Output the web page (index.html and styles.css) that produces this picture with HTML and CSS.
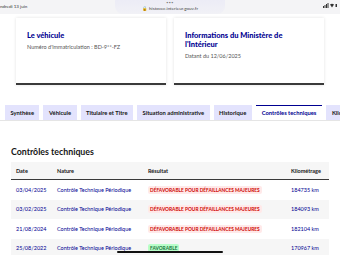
FILE: index.html
```html
<!DOCTYPE html>
<html lang="fr">
<head>
    <meta charset="UTF-8">
    <meta name="viewport" content="width=device-width, initial-scale=1.0">
    <title>HistoVec</title>
    <link rel="stylesheet" href="styles.css">
</head>
<body>
    <div class="statusbar">
        <span class="time">ndredi 13 juin</span>
        <div class="urlbox">
            <span class="dots">•••</span>
            <span class="url">🔒 histovec.interieur.gouv.fr</span>
        </div>
        <span class="icons">
            <svg width="14" height="5" viewBox="0 0 14 5">
                <rect x="0" y="3" width="1" height="2" fill="#333"/>
                <rect x="1.5" y="2" width="1" height="3" fill="#333"/>
                <rect x="3" y="1" width="1" height="4" fill="#333"/>
                <rect x="4.5" y="0" width="1" height="5" fill="#333"/>
                <path d="M7 1.6 Q9 0 11 1.6 L9 4.5 Z" fill="#333"/>
                <rect x="12.5" y="1" width="1.5" height="3" fill="#333"/>
            </svg>
        </span>
    </div>

    <div class="cards">
        <div class="card">
            <h3 class="card-title">Le véhicule</h3>
            <p class="card-text">Numéro d'immatriculation : BD-9**-FZ</p>
        </div>
        <div class="card">
            <h3 class="card-title">Informations du Ministère de l'Intérieur</h3>
            <p class="card-text">Datant du 12/06/2025</p>
        </div>
    </div>

    <div class="tabs">
        <div class="tab">Synthèse</div>
        <div class="tab">Véhicule</div>
        <div class="tab">Titulaire et Titre</div>
        <div class="tab">Situation administrative</div>
        <div class="tab">Historique</div>
        <div class="tab active">Contrôles techniques</div>
        <div class="tab">Kilométrage</div>
    </div>

    <div class="panel">
        <h2 class="panel-title">Contrôles techniques</h2>
        <table class="ct-table">
            <thead>
                <tr>
                    <th class="col-date">Date</th>
                    <th class="col-nature">Nature</th>
                    <th class="col-result">Résultat</th>
                    <th class="col-km">Kilométrage</th>
                </tr>
            </thead>
            <tbody>
                <tr>
                    <td>03/04/2025</td>
                    <td>Contrôle Technique Périodique</td>
                    <td><span class="badge bad">Défavorable pour défaillances majeures</span></td>
                    <td>184735 km</td>
                </tr>
                <tr>
                    <td>03/02/2025</td>
                    <td>Contrôle Technique Périodique</td>
                    <td><span class="badge bad">Défavorable pour défaillances majeures</span></td>
                    <td>184093 km</td>
                </tr>
                <tr>
                    <td>21/08/2024</td>
                    <td>Contrôle Technique Périodique</td>
                    <td><span class="badge bad">Défavorable pour défaillances majeures</span></td>
                    <td>182104 km</td>
                </tr>
                <tr>
                    <td>25/08/2022</td>
                    <td>Contrôle Technique Périodique</td>
                    <td><span class="badge good">Favorable</span></td>
                    <td>170967 km</td>
                </tr>
            </tbody>
        </table>
    </div>

    <div class="home-indicator"></div>
</body>
</html>
```

FILE: styles.css
```css
body {
    margin: 0;
    width: 340px;
    height: 255px;
    overflow: hidden;
    font-family: Lato, "Noto Sans", sans-serif;
    background-color: #fff;
    color: #161616;
    position: relative;
}
.statusbar {
    height: 14px;
    background-color: #f4f4f6;
    display: flex;
    align-items: flex-start;
    justify-content: space-between;
    font-size: 4.5px;
    color: #333;
}
.time {
    padding-top: 4px;
    width: 60px;
}
.urlbox {
    display: flex;
    flex-direction: column;
    align-items: center;
    width: 110px;
    height: 14px;
    background: linear-gradient(to bottom, #ececf6, #f1f1f6);
    border-radius: 0 0 8px 8px;
}
.dots {
    font-size: 3.5px;
    letter-spacing: 0.5px;
    line-height: 6px;
    color: #777;
}
.url {
    font-size: 4.5px;
    color: #444;
}
.icons {
    width: 60px;
    text-align: right;
    padding-top: 3px;
    padding-right: 3px;
    box-sizing: border-box;
}
.cards {
    display: flex;
    gap: 8px;
    padding: 4px 16px 0;
}
.card {
    flex: 1;
    background-color: #fff;
    box-shadow: 0 0 3px rgba(0, 0, 0, 0.12);
    border-bottom: 2px solid #3a3a3a;
    padding: 13px 12px 0 11px;
    height: 52px;
}
.card-title {
    margin: 0 0 4px;
    font-size: 7.5px;
    line-height: 9px;
    font-weight: 900;
    color: #000091;
    padding-right: 20px;
}
.card-text {
    margin: 0;
    font-size: 5.5px;
    color: #555;
}
.tabs {
    display: flex;
    gap: 4px;
    margin-top: 20px;
    padding-left: 5px;
    overflow: hidden;
    white-space: nowrap;
    border-bottom: 1px solid #e5e5e5;
    height: 15px;
}
.tab {
    background-color: #e3e3fd;
    font-size: 5.8px;
    font-weight: 700;
    line-height: 15px;
    padding: 0 5.5px;
    color: #161616;
    flex-shrink: 0;
}
.tab.active {
    background-color: #fff;
    border-top: 1.5px solid #000091;
    color: #000091;
    line-height: 14px;
    padding: 0 6px;
    margin-bottom: -1px;
    height: 15px;
}
.panel {
    padding: 25px 11px 0;
}
.panel-title {
    margin: 0 0 5px;
    font-size: 8.8px;
    font-weight: 700;
    line-height: 11px;
}
.ct-table {
    width: 318px;
    border-collapse: collapse;
    font-size: 5.5px;
}
.ct-table th {
    background-color: #f6f6f6;
    text-align: left;
    font-weight: 700;
    height: 17px;
    border-bottom: 1.5px solid #3a3a3a;
    padding: 0 5px;
}
.ct-table td {
    height: 19.5px;
    padding: 0 5px;
    color: #000091;
}
.ct-table tbody tr:nth-child(even) td {
    background-color: #f6f6f6;
}
.col-date { width: 31px; }
.col-nature { width: 81px; }
.col-km { width: 33px; }
.badge {
    display: inline-block;
    font-weight: 700;
    text-transform: uppercase;
    font-size: 4.8px;
    padding: 1px 2px;
    border-radius: 2px;
    line-height: 6px;
}
.badge.bad {
    background-color: #ffe9e9;
    color: #ce0500;
}
.badge.good {
    background-color: #b8fec9;
    color: #18753c;
}
.home-indicator {
    position: absolute;
    left: 117px;
    bottom: 2px;
    width: 106px;
    height: 2px;
    border-radius: 1px;
    background-color: #111;
}
```
